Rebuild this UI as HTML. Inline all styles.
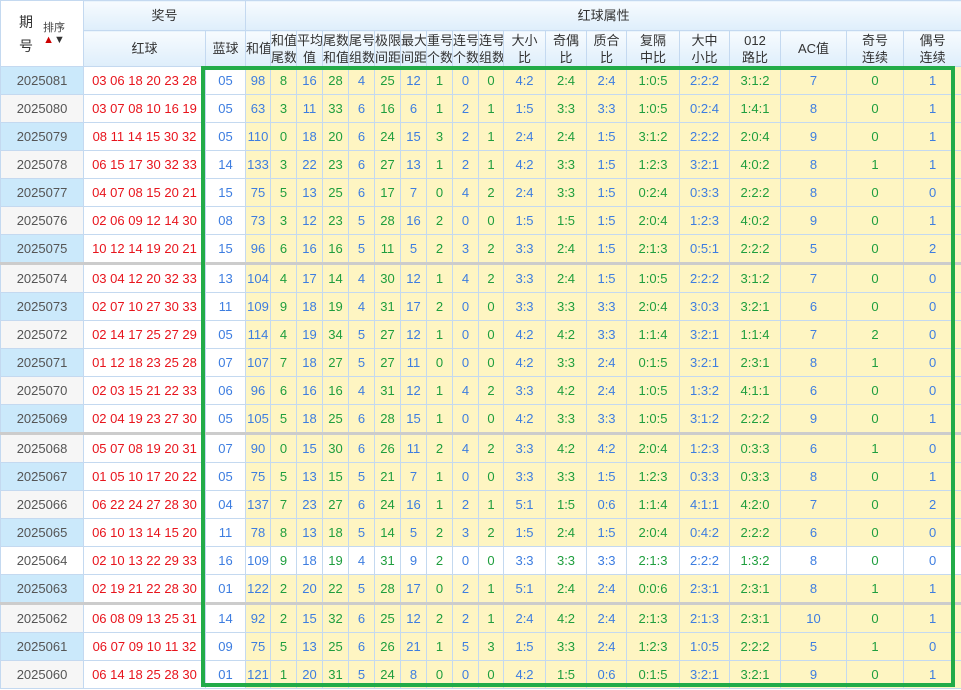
<!DOCTYPE html>
<html><head><meta charset="utf-8">
<style>
html,body{margin:0;padding:0;background:#fff;}
body{width:961px;height:690px;overflow:hidden;position:relative;font-family:"Liberation Sans","Noto Sans CJK SC",sans-serif;}
table{border-collapse:collapse;table-layout:fixed;width:961px;position:absolute;left:0;top:0;}
td,th{border:1px solid #c4d9f0;padding:0;text-align:center;font-size:13px;white-space:nowrap;overflow:hidden;}
th{font-weight:normal;color:#333;background:linear-gradient(#f7fbfe,#deeefb);line-height:17px;}
tr.h1 th{height:29px;}
tr.h2 th{height:35px;}
tbody tr td{height:27px;}
td.q{color:#555;background:#f6f6f6;}
tr.a td.q{background:#cbe9fb;}
td.r{color:#e8141c;background:#fff;}
td.b{color:#3d7de0;background:#fff;}
td.y{background:#fef5c2;}
td.g{color:#1f9e3e;}
td.u{color:#3d7de0;}
tr.w td{background:#fff !important;}
tr.w td.q{background:#fff !important;}
tr.s td{border-top:3px solid #cccccc;}
#box{position:absolute;left:201px;top:66px;width:746px;height:613px;border:4px solid #22ab48;}
.sort{font-size:11px;color:#444;line-height:12px;}
.ar{font-size:11px;line-height:11px;}
</style></head><body>
<table>
<colgroup><col style="width:83px"><col style="width:122px"><col style="width:40px"><col style="width:25px"><col style="width:26px"><col style="width:26px"><col style="width:26px"><col style="width:26px"><col style="width:26px"><col style="width:26px"><col style="width:26px"><col style="width:26px"><col style="width:25px"><col style="width:42px"><col style="width:41px"><col style="width:40px"><col style="width:53px"><col style="width:50px"><col style="width:51px"><col style="width:66px"><col style="width:57px"><col style="width:58px"></colgroup>
<thead>
<tr class="h1"><th rowspan="2" style="background:#fff;"><div style="display:flex;align-items:center;justify-content:center;gap:10px;"><div style="font-size:14px;line-height:24px;">期<br>号</div><div class="sort">排序<br><span class="ar" style="color:#c00;">▲</span><span class="ar" style="color:#333;">▼</span></div></div></th><th colspan="2">奖号</th><th colspan="19">红球属性</th></tr>
<tr class="h2"><th>红球</th><th>蓝球</th><th>和值</th><th>和值<br>尾数</th><th>平均<br>值</th><th>尾数<br>和值</th><th>尾号<br>组数</th><th>极限<br>间距</th><th>最大<br>间距</th><th>重号<br>个数</th><th>连号<br>个数</th><th>连号<br>组数</th><th>大小<br>比</th><th>奇偶<br>比</th><th>质合<br>比</th><th>复隔<br>中比</th><th>大中<br>小比</th><th>012<br>路比</th><th>AC值</th><th>奇号<br>连续</th><th>偶号<br>连续</th></tr>
</thead>
<tbody id="tb"></tbody>
</table>
<div id="box"></div>
<script>
var d=[
"2025081|03 06 18 20 23 28|05|98 8 16 28 4 25 12 1 0 0 4:2 2:4 2:4 1:0:5 2:2:2 3:1:2 7 0 1",
"2025080|03 07 08 10 16 19|05|63 3 11 33 6 16 6 1 2 1 1:5 3:3 3:3 1:0:5 0:2:4 1:4:1 8 0 1",
"2025079|08 11 14 15 30 32|05|110 0 18 20 6 24 15 3 2 1 2:4 2:4 1:5 3:1:2 2:2:2 2:0:4 9 0 1",
"2025078|06 15 17 30 32 33|14|133 3 22 23 6 27 13 1 2 1 4:2 3:3 1:5 1:2:3 3:2:1 4:0:2 8 1 1",
"2025077|04 07 08 15 20 21|15|75 5 13 25 6 17 7 0 4 2 2:4 3:3 1:5 0:2:4 0:3:3 2:2:2 8 0 0",
"2025076|02 06 09 12 14 30|08|73 3 12 23 5 28 16 2 0 0 1:5 1:5 1:5 2:0:4 1:2:3 4:0:2 9 0 1",
"2025075|10 12 14 19 20 21|15|96 6 16 16 5 11 5 2 3 2 3:3 2:4 1:5 2:1:3 0:5:1 2:2:2 5 0 2",
"2025074|03 04 12 20 32 33|13|104 4 17 14 4 30 12 1 4 2 3:3 2:4 1:5 1:0:5 2:2:2 3:1:2 7 0 0",
"2025073|02 07 10 27 30 33|11|109 9 18 19 4 31 17 2 0 0 3:3 3:3 3:3 2:0:4 3:0:3 3:2:1 6 0 0",
"2025072|02 14 17 25 27 29|05|114 4 19 34 5 27 12 1 0 0 4:2 4:2 3:3 1:1:4 3:2:1 1:1:4 7 2 0",
"2025071|01 12 18 23 25 28|07|107 7 18 27 5 27 11 0 0 0 4:2 3:3 2:4 0:1:5 3:2:1 2:3:1 8 1 0",
"2025070|02 03 15 21 22 33|06|96 6 16 16 4 31 12 1 4 2 3:3 4:2 2:4 1:0:5 1:3:2 4:1:1 6 0 0",
"2025069|02 04 19 23 27 30|05|105 5 18 25 6 28 15 1 0 0 4:2 3:3 3:3 1:0:5 3:1:2 2:2:2 9 0 1",
"2025068|05 07 08 19 20 31|07|90 0 15 30 6 26 11 2 4 2 3:3 4:2 4:2 2:0:4 1:2:3 0:3:3 6 1 0",
"2025067|01 05 10 17 20 22|05|75 5 13 15 5 21 7 1 0 0 3:3 3:3 1:5 1:2:3 0:3:3 0:3:3 8 0 1",
"2025066|06 22 24 27 28 30|04|137 7 23 27 6 24 16 1 2 1 5:1 1:5 0:6 1:1:4 4:1:1 4:2:0 7 0 2",
"2025065|06 10 13 14 15 20|11|78 8 13 18 5 14 5 2 3 2 1:5 2:4 1:5 2:0:4 0:4:2 2:2:2 6 0 0",
"2025064|02 10 13 22 29 33|16|109 9 18 19 4 31 9 2 0 0 3:3 3:3 3:3 2:1:3 2:2:2 1:3:2 8 0 0",
"2025063|02 19 21 22 28 30|01|122 2 20 22 5 28 17 0 2 1 5:1 2:4 2:4 0:0:6 2:3:1 2:3:1 8 1 1",
"2025062|06 08 09 13 25 31|14|92 2 15 32 6 25 12 2 2 1 2:4 4:2 2:4 2:1:3 2:1:3 2:3:1 10 0 1",
"2025061|06 07 09 10 11 32|09|75 5 13 25 6 26 21 1 5 3 1:5 3:3 2:4 1:2:3 1:0:5 2:2:2 5 1 0",
"2025060|06 14 18 25 28 30|01|121 1 20 31 5 24 8 0 0 0 4:2 1:5 0:6 0:1:5 3:2:1 3:2:1 9 0 1"];
var h="";
d.forEach(function(r,i){var p=r.split("|");var c=[];if(i%2==0)c.push("a");if(i==7||i==13||i==19)c.push("s");if(i==17)c.push("w");
h+='<tr class="'+c.join(" ")+'"><td class="q">'+p[0]+'</td><td class="r">'+p[1]+'</td><td class="b">'+p[2]+'</td>';
p[3].split(" ").forEach(function(v,j){h+='<td class="y '+(j%2?'g':'u')+'">'+v+'</td>';});h+='</tr>';});
document.getElementById("tb").innerHTML=h;
</script>
</body></html>
